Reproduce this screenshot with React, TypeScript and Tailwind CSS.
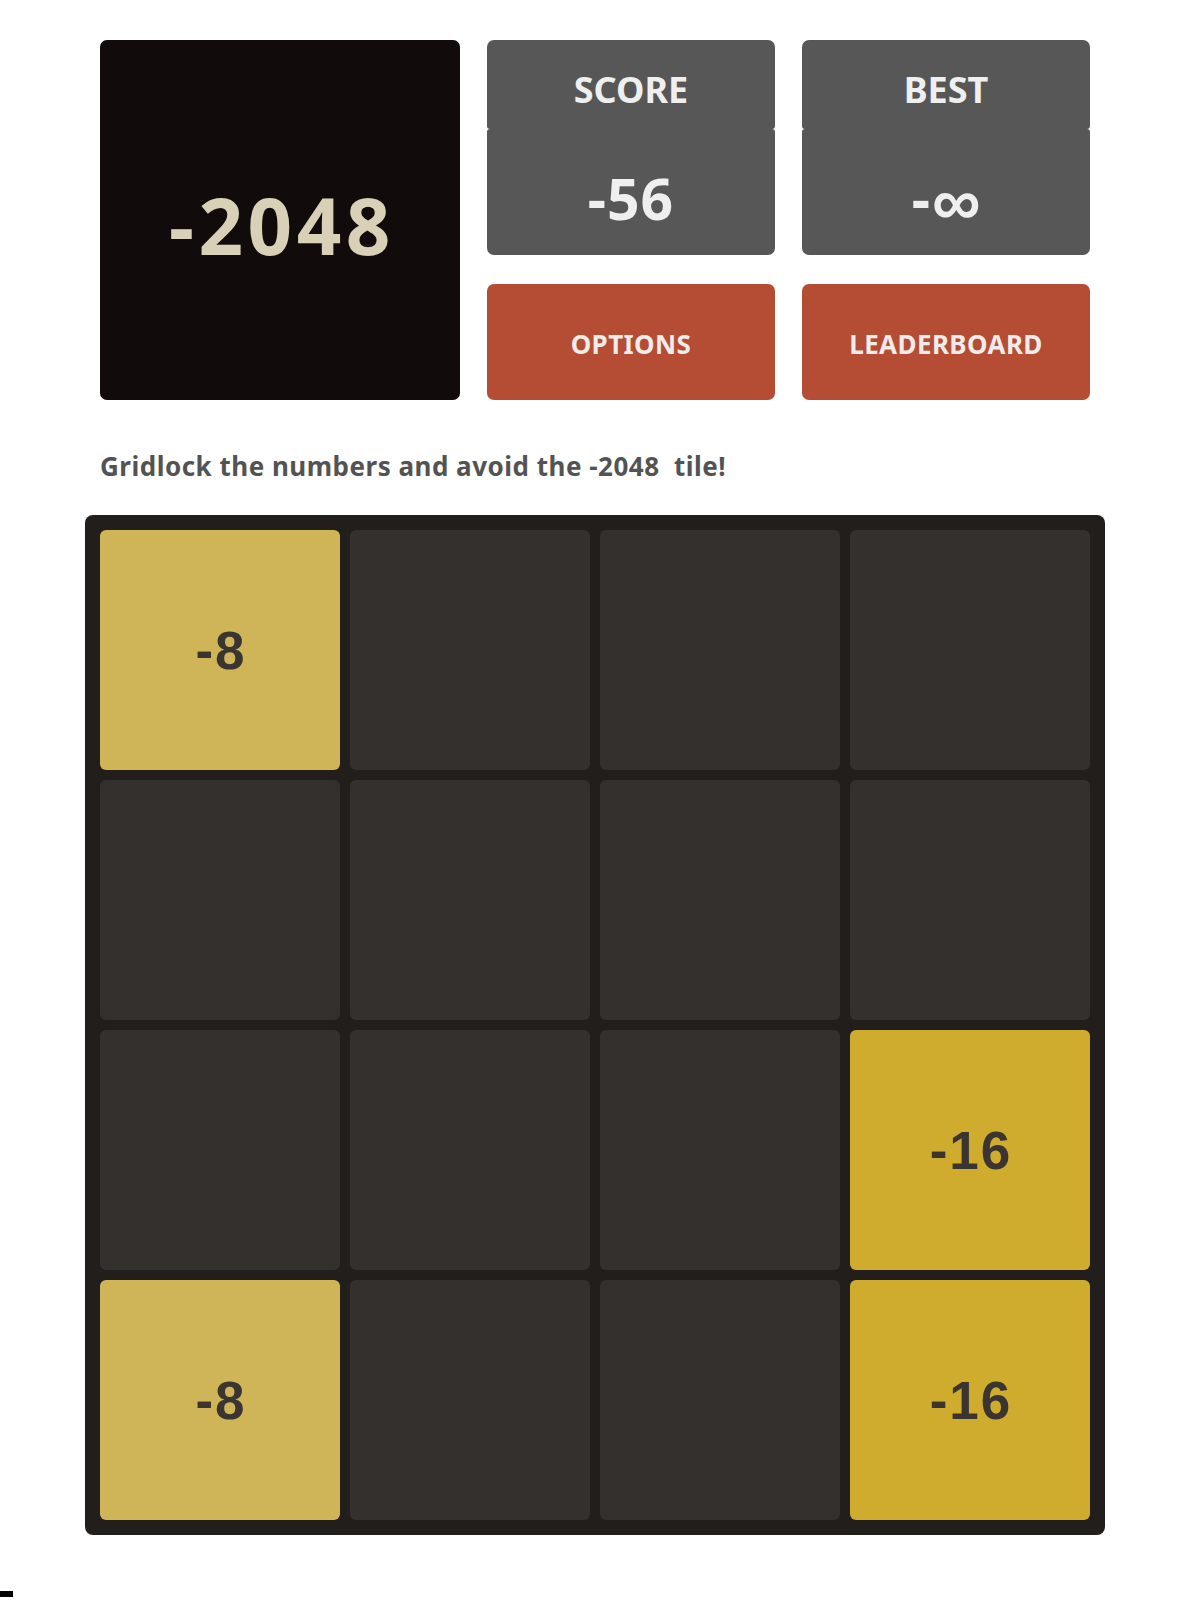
import React from "react";

type Cell = number | null;

const board: Cell[][] = [
  [-8, null, null, null],
  [null, null, null, null],
  [null, null, null, -16],
  [-8, null, null, -16],
];

function tileClass(v: Cell): string {
  if (v === -8) return "bg-[#cfb557]";
  if (v === -16) return "bg-[#cfac2d]";
  return "bg-[#33302d]";
}

function StatBox({ label, children }: { label: string; children: React.ReactNode }) {
  return (
    <div className="flex flex-col">
      <div className="h-[89px] rounded-t-[7px] rounded-b-[3px] bg-[#575757] flex items-center justify-center pt-[11px]">
        <span className="text-[36px] leading-none font-bold text-[#efefef] font-['Noto_Sans',sans-serif]">
          {label}
        </span>
      </div>
      <div className="h-[126px] rounded-b-[7px] rounded-t-[3px] bg-[#575757] flex items-center justify-center pt-[13px]">
        {children}
      </div>
    </div>
  );
}

function ActionButton({ label }: { label: string }) {
  return (
    <button className="h-[116px] rounded-[7px] bg-[#b44d34] flex items-center justify-center pt-[5px]">
      <span className="text-[26px] leading-none font-bold tracking-[0.4px] text-[#f1ece9] font-['Noto_Sans',sans-serif]">
        {label}
      </span>
    </button>
  );
}

export default function App() {
  return (
    <div className="min-h-[1600px] bg-white">
      <div className="ml-[85px] pt-[40px] w-[1020px]">
        {/* header: logo, score/best, buttons */}
        <div className="ml-[15px] flex gap-[27px]">
          <div className="w-[360px] h-[360px] rounded-[7px] bg-[#110c0b] flex items-center justify-center pt-[9px] pl-[4px]">
            <span className="text-[78px] leading-none font-bold tracking-[4.5px] text-[#d8d1b7] font-['Noto_Sans',sans-serif]">
              -2048
            </span>
          </div>
          <div className="grid grid-cols-[288px_288px] gap-x-[27px] gap-y-[28px]">
            <StatBox label="SCORE">
              <span className="text-[57px] leading-none font-bold tracking-[1px] text-[#efefef] font-['Noto_Sans',sans-serif]">
                -56
              </span>
            </StatBox>
            <StatBox label="BEST">
              <span className="flex items-center text-[#efefef] font-['Noto_Sans',sans-serif] font-bold leading-none">
                <span className="text-[57px]">-</span>
                <span className="text-[68px] ml-[2px]">∞</span>
              </span>
            </StatBox>
            <ActionButton label="OPTIONS" />
            <ActionButton label="LEADERBOARD" />
          </div>
        </div>

        {/* tagline */}
        <p className="ml-[15px] mt-[48px] text-[26px] leading-[36px] font-bold tracking-[0.5px] text-[#535353] font-['Noto_Sans',sans-serif]">
          {"Gridlock the numbers and avoid the -2048\u00a0 tile!"}
        </p>

        {/* game board */}
        <div className="mt-[31px] w-[1020px] rounded-[8px] bg-[#221e1c] p-[15px] grid grid-cols-4 gap-[10px]">
          {board.flat().map((v, i) => (
            <div
              key={i}
              className={`h-[240px] rounded-[6px] flex items-center justify-center pl-[2px] ${tileClass(v)}`}
            >
              {v !== null && (
                <span className="text-[53px] leading-none font-bold tracking-[2px] text-[#3a3531] font-['Liberation_Sans',Arial,sans-serif]">
                  {v}
                </span>
              )}
            </div>
          ))}
        </div>
      </div>
      <div className="mt-[56px] w-[13px] h-[6px] bg-black" />
    </div>
  );
}
